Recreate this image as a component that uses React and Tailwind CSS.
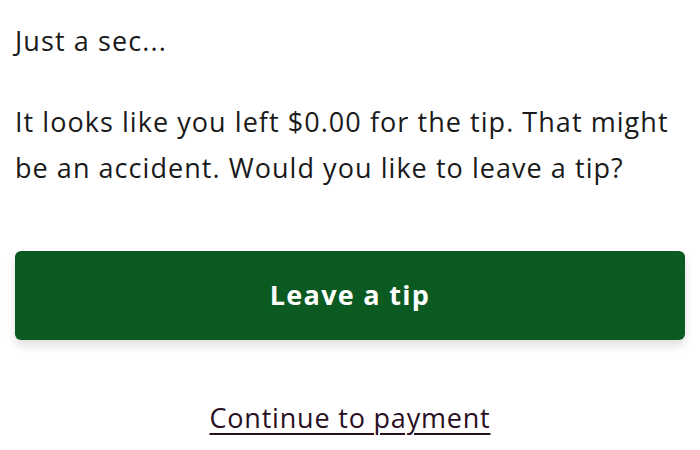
export default function App() {
  return (
    <div className="w-[700px] h-[450px] bg-white px-[15px] pt-[18px] font-['Open_Sans',sans-serif] text-[#1a1a1a]">
      <p className="text-[27px] leading-[46px] tracking-[1.1px]">Just a sec...</p>
      <p className="mt-[35px] text-[27px] leading-[46px] tracking-[1.05px]">
        It looks like you left $0.00 for the tip. That might be an accident. Would you like to leave a tip?
      </p>
      <button className="mt-[60px] w-full h-[89px] rounded-[6px] bg-[#0b5a21] text-white text-[27px] font-bold tracking-[1.3px] shadow-[0_6px_10px_rgba(0,0,0,0.12)]">
        Leave a tip
      </button>
      <div className="mt-[58px] text-center">
        <a href="#" className="text-[27px] tracking-[0.8px] text-[#2a0f1f] underline underline-offset-[5px] decoration-[2px]">
          Continue to payment
        </a>
      </div>
    </div>
  );
}
